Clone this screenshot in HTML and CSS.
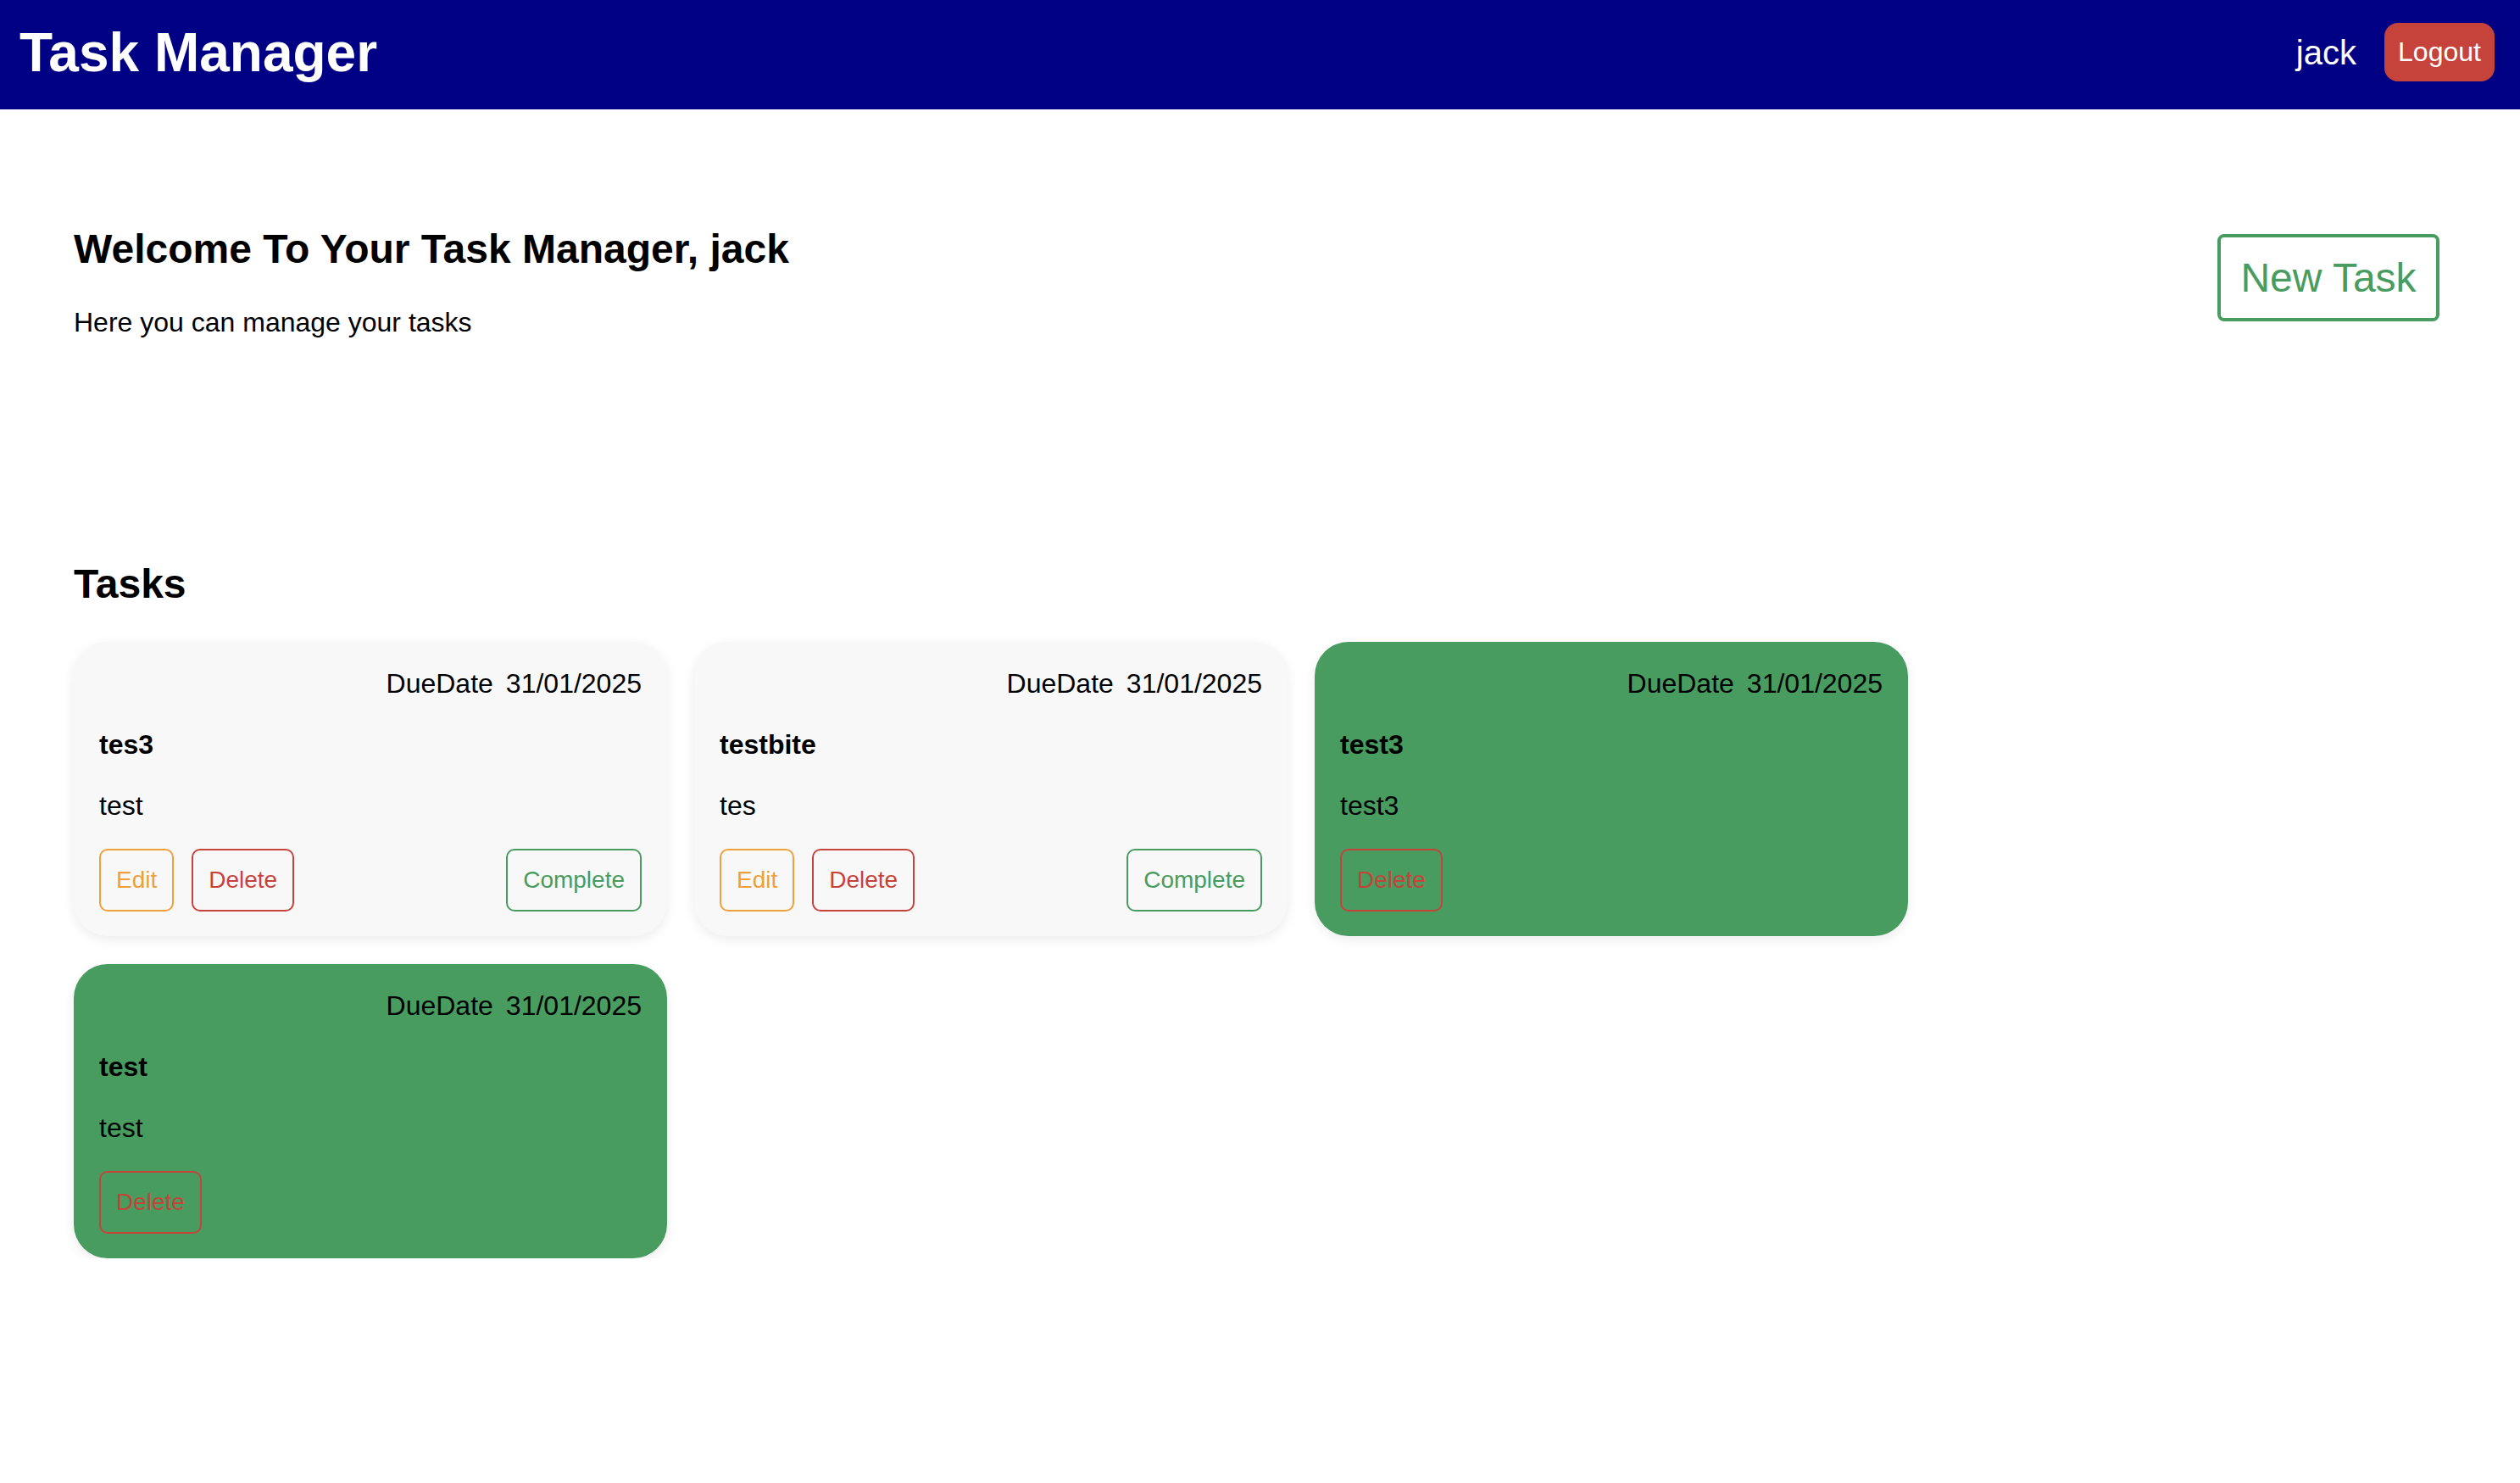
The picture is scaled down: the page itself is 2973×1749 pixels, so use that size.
FILE: index.html
```html
<!DOCTYPE html>
<html lang="en">
<head>
<meta charset="utf-8">
<title>Task Manager</title>
<link rel="stylesheet" href="styles.css">
</head>
<body>
<header class="topbar">
  <h1 class="brand">Task Manager</h1>
  <div class="user">
    <span class="username">jack</span>
    <button class="logout">Logout</button>
  </div>
</header>
<main class="main">
  <section class="intro">
    <div class="intro-text">
      <h2 class="welcome">Welcome To Your Task Manager, jack</h2>
      <p class="subtitle">Here you can manage your tasks</p>
    </div>
    <button class="new-task">New Task</button>
  </section>
  <h2 class="tasks-title">Tasks</h2>
  <section class="task-grid">
    <article class="card">
      <div class="due"><span>DueDate</span><span>31/01/2025</span></div>
      <h3 class="card-title">tes3</h3>
      <p class="card-desc">test</p>
      <div class="actions">
        <button class="btn btn-edit">Edit</button>
        <button class="btn btn-delete">Delete</button>
        <button class="btn btn-complete">Complete</button>
      </div>
    </article>
    <article class="card">
      <div class="due"><span>DueDate</span><span>31/01/2025</span></div>
      <h3 class="card-title">testbite</h3>
      <p class="card-desc">tes</p>
      <div class="actions">
        <button class="btn btn-edit">Edit</button>
        <button class="btn btn-delete">Delete</button>
        <button class="btn btn-complete">Complete</button>
      </div>
    </article>
    <article class="card card-done">
      <div class="due"><span>DueDate</span><span>31/01/2025</span></div>
      <h3 class="card-title">test3</h3>
      <p class="card-desc">test3</p>
      <div class="actions">
        <button class="btn btn-delete">Delete</button>
      </div>
    </article>
    <article class="card card-done">
      <div class="due"><span>DueDate</span><span>31/01/2025</span></div>
      <h3 class="card-title">test</h3>
      <p class="card-desc">test</p>
      <div class="actions">
        <button class="btn btn-delete">Delete</button>
      </div>
    </article>
  </section>
</main>
</body>
</html>
```
FILE: styles.css
```css
* { box-sizing: border-box; }

html, body {
  margin: 0;
  padding: 0;
  background: #ffffff;
  font-family: "Liberation Sans", Arial, Helvetica, sans-serif;
  color: #000000;
}

button {
  font-family: inherit;
  cursor: pointer;
}

.topbar {
  height: 129px;
  background: #000084;
  display: flex;
  align-items: center;
  justify-content: space-between;
  padding: 0 30px 6px 23px;
}

.brand {
  margin: 0;
  color: #ffffff;
  font-size: 64px;
  font-weight: 700;
  line-height: 74px;
}

.user {
  display: flex;
  align-items: center;
  gap: 33px;
}

.username {
  color: #ffffff;
  font-size: 40px;
  line-height: 46px;
}

.logout {
  background: #c6433b;
  color: #ffffff;
  border: none;
  border-radius: 16px;
  font-size: 32px;
  line-height: 37px;
  padding: 16px 16px;
  width: 130px;
  height: 69px;
}

.main {
  padding: 0 95px 0 87px;
}

.intro {
  margin-top: 137px;
  display: flex;
  justify-content: space-between;
  align-items: flex-start;
}

.welcome {
  margin: 0;
  font-size: 48px;
  font-weight: 700;
  line-height: 55px;
}

.subtitle {
  margin: 41px 0 0;
  font-size: 32px;
  line-height: 37px;
}

.new-task {
  margin-top: 10px;
  background: #ffffff;
  color: #489c5f;
  border: 4px solid #489c5f;
  border-radius: 8px;
  font-size: 48px;
  line-height: 55px;
  padding: 20px 20px;
  width: 262px;
  height: 103px;
}

.tasks-title {
  margin: 262px 0 0;
  font-size: 48px;
  font-weight: 700;
  line-height: 55px;
}

.task-grid {
  margin-top: 41px;
  display: grid;
  grid-template-columns: repeat(auto-fill, 700px);
  column-gap: 32px;
  row-gap: 33px;
}

.card {
  background: #f8f8f8;
  border-radius: 40px;
  padding: 31px 30px 30px 30px;
  height: 347px;
  box-shadow: 0 4px 14px rgba(0, 0, 0, 0.08);
  display: flex;
  flex-direction: column;
}

.card-done {
  background: #489c5f;
}

.due {
  display: flex;
  justify-content: flex-end;
  gap: 15px;
  font-size: 32px;
  line-height: 37px;
}

.card-title {
  margin: 35px 0 0;
  font-size: 32px;
  font-weight: 700;
  line-height: 37px;
}

.card-desc {
  margin: 35px 0 0;
  font-size: 32px;
  line-height: 37px;
}

.actions {
  margin-top: 32px;
  display: flex;
  gap: 21px;
}

.btn {
  background: transparent;
  border: 2px solid;
  border-radius: 10px;
  font-size: 28px;
  line-height: 32px;
  height: 74px;
  padding: 19px 18px;
}

.btn-edit {
  color: #f0a03a;
  border-color: #f0a03a;
}

.btn-delete {
  color: #c6433b;
  border-color: #c6433b;
}

.btn-complete {
  margin-left: auto;
  color: #489c5f;
  border-color: #489c5f;
}
```
